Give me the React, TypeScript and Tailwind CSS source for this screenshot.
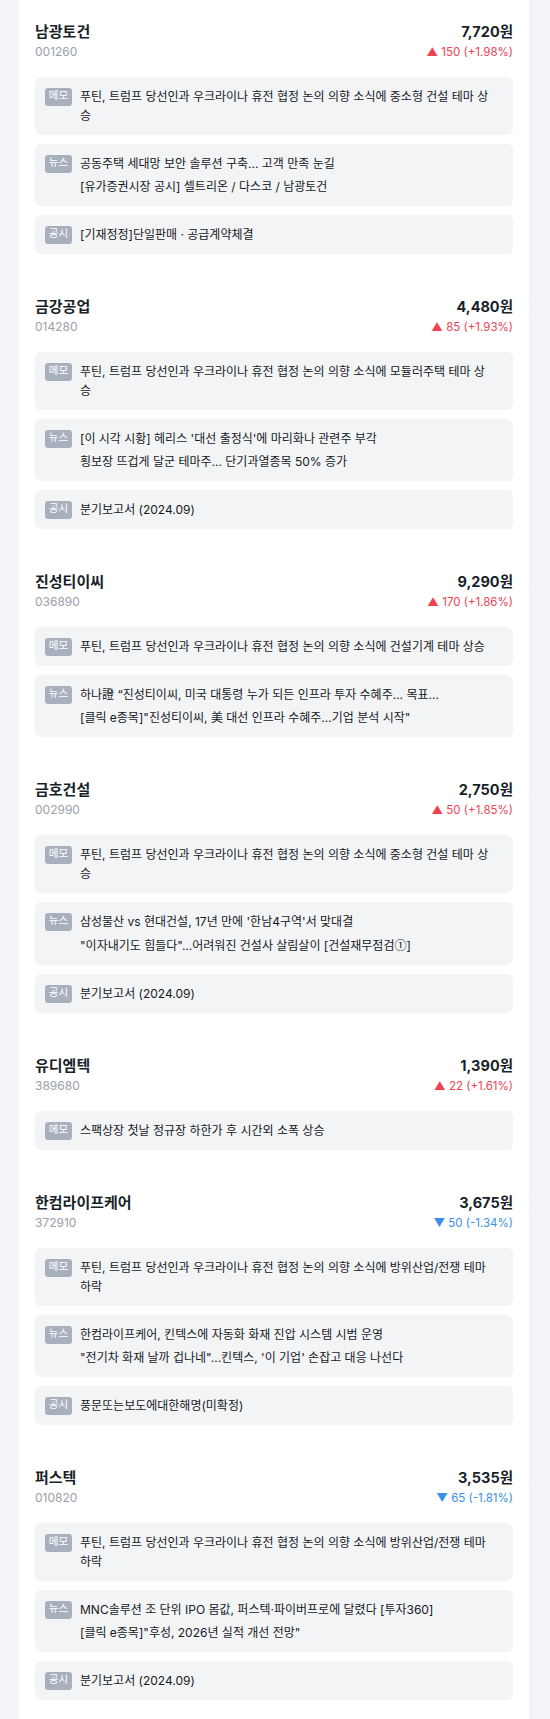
import type { ReactNode } from "react";

type Item = {
  kind: "메모" | "뉴스" | "공시";
  lines: ReactNode[];
};

type Stock = {
  name: string;
  code: string;
  price: string;
  diff: string;
  rate: string;
  up: boolean;
  items: Item[];
};

const MEMO_BUILD =
  "푸틴, 트럼프 당선인과 우크라이나 휴전 협정 논의 의향 소식에 중소형 건설 테마 상승";
const MEMO_DEFENSE =
  "푸틴, 트럼프 당선인과 우크라이나 휴전 협정 논의 의향 소식에 방위산업/전쟁 테마 하락";
const QUARTER = "분기보고서 (2024.09)";

const stocks: Stock[] = [
  {
    name: "남광토건",
    code: "001260",
    price: "7,720원",
    diff: "150",
    rate: "+1.98%",
    up: true,
    items: [
      { kind: "메모", lines: [MEMO_BUILD] },
      {
        kind: "뉴스",
        lines: [
          "공동주택 세대망 보안 솔루션 구축... 고객 만족 눈길",
          "[유가증권시장 공시] 셀트리온 / 다스코 / 남광토건",
        ],
      },
      { kind: "공시", lines: ["[기재정정]단일판매 · 공급계약체결"] },
    ],
  },
  {
    name: "금강공업",
    code: "014280",
    price: "4,480원",
    diff: "85",
    rate: "+1.93%",
    up: true,
    items: [
      {
        kind: "메모",
        lines: [
          "푸틴, 트럼프 당선인과 우크라이나 휴전 협정 논의 의향 소식에 모듈러주택 테마 상승",
        ],
      },
      {
        kind: "뉴스",
        lines: [
          "[이 시각 시황] 헤리스 '대선 출정식'에 마리화나 관련주 부각",
          "횡보장 뜨겁게 달군 테마주... 단기과열종목 50% 증가",
        ],
      },
      { kind: "공시", lines: [QUARTER] },
    ],
  },
  {
    name: "진성티이씨",
    code: "036890",
    price: "9,290원",
    diff: "170",
    rate: "+1.86%",
    up: true,
    items: [
      {
        kind: "메모",
        lines: [
          "푸틴, 트럼프 당선인과 우크라이나 휴전 협정 논의 의향 소식에 건설기계 테마 상승",
        ],
      },
      {
        kind: "뉴스",
        lines: [
          "하나證 “진성티이씨, 미국 대통령 누가 되든 인프라 투자 수혜주... 목표...",
          "[클릭 e종목]\"진성티이씨, 美 대선 인프라 수혜주...기업 분석 시작\"",
        ],
      },
    ],
  },
  {
    name: "금호건설",
    code: "002990",
    price: "2,750원",
    diff: "50",
    rate: "+1.85%",
    up: true,
    items: [
      { kind: "메모", lines: [MEMO_BUILD] },
      {
        kind: "뉴스",
        lines: [
          "삼성물산 vs 현대건설, 17년 만에 '한남4구역'서 맞대결",
          <>
            "이자내기도 힘들다"...어려워진 건설사 살림살이 [건설재무점검
            <span className="font-['Noto_Sans_CJK_KR',sans-serif]">①</span>]
          </>,
        ],
      },
      { kind: "공시", lines: [QUARTER] },
    ],
  },
  {
    name: "유디엠텍",
    code: "389680",
    price: "1,390원",
    diff: "22",
    rate: "+1.61%",
    up: true,
    items: [
      {
        kind: "메모",
        lines: ["스팩상장 첫날 정규장 하한가 후 시간외 소폭 상승"],
      },
    ],
  },
  {
    name: "한컴라이프케어",
    code: "372910",
    price: "3,675원",
    diff: "50",
    rate: "-1.34%",
    up: false,
    items: [
      { kind: "메모", lines: [MEMO_DEFENSE] },
      {
        kind: "뉴스",
        lines: [
          "한컴라이프케어, 킨텍스에 자동화 화재 진압 시스템 시범 운영",
          "\"전기차 화재 날까 겁나네\"...킨텍스, '이 기업' 손잡고 대응 나선다",
        ],
      },
      { kind: "공시", lines: ["풍문또는보도에대한해명(미확정)"] },
    ],
  },
  {
    name: "퍼스텍",
    code: "010820",
    price: "3,535원",
    diff: "65",
    rate: "-1.81%",
    up: false,
    items: [
      { kind: "메모", lines: [MEMO_DEFENSE] },
      {
        kind: "뉴스",
        lines: [
          "MNC솔루션 조 단위 IPO 몸값, 퍼스텍·파이버프로에 달렸다 [투자360]",
          "[클릭 e종목]\"후성, 2026년 실적 개선 전망\"",
        ],
      },
      { kind: "공시", lines: [QUARTER] },
    ],
  },
];

function InfoCard({ item }: { item: Item }) {
  return (
    <div className="flex items-start gap-2 rounded-md bg-[#f2f4f6] py-[10px] pl-[10px] pr-[23px]">
      <span className="mt-[0.5px] flex h-[18px] w-[27px] shrink-0 items-center justify-center rounded-[3px] bg-[#a8b0be] text-[10.5px] leading-none text-white">
        {item.kind}
      </span>
      <div className="flex min-w-0 flex-1 flex-col gap-1 text-[12px] leading-[19px] text-[#16191d]">
        {item.lines.map((line, i) => (
          <div key={i}>{line}</div>
        ))}
      </div>
    </div>
  );
}

function StockSection({ stock }: { stock: Stock }) {
  return (
    <section className="pt-[22px] pb-[21px]">
      <div className="flex items-start justify-between">
        <div>
          <div className="text-[15px] font-bold leading-[20px] text-[#191f28]">
            {stock.name}
          </div>
          <div className="text-[12px] leading-[20px] text-[#9aa0a8]">
            {stock.code}
          </div>
        </div>
        <div className="text-right">
          <div className="text-[14.5px] font-bold leading-[20px] text-[#191f28]">
            {stock.price}
          </div>
          <div
            className={
              stock.up
                ? "text-[11.5px] leading-[20px] text-[#ec4452]"
                : "text-[11.5px] leading-[20px] text-[#3a8ee6]"
            }
          >
            {stock.up ? "▲" : "▼"} {stock.diff} ({stock.rate})
          </div>
        </div>
      </div>

      <div className="mt-[15px] flex flex-col gap-[9px]">
        {stock.items.map((item, i) => (
          <InfoCard key={i} item={item} />
        ))}
      </div>
    </section>
  );
}

export default function App() {
  return (
    <div className="min-h-screen bg-[#f2f4f7] font-['Inter','Noto_Sans_CJK_KR',sans-serif]">
      <div className="ml-[19px] min-h-screen w-[510px] bg-white px-4">
        {stocks.map((stock) => (
          <StockSection key={stock.code} stock={stock} />
        ))}
      </div>
    </div>
  );
}
